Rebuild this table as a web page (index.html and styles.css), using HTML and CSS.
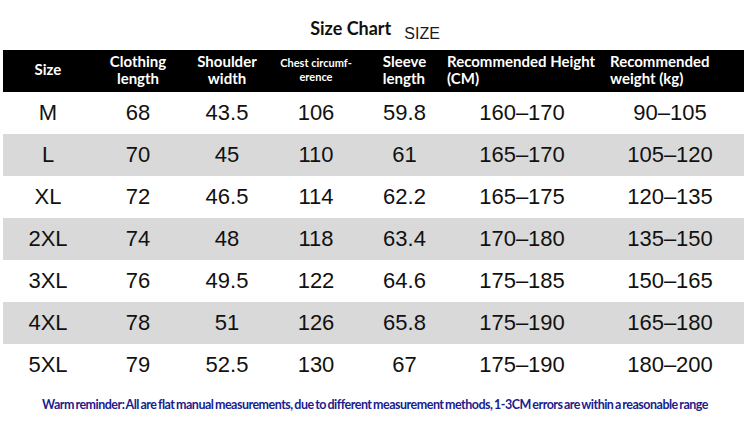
FILE: index.html
```html
<!DOCTYPE html>
<html>
<head>
<meta charset="utf-8">
<link rel="stylesheet" href="styles.css">
</head>
<body>
<div class="page">
  <div class="title"><span class="title-main">Size Chart</span><span class="title-sub">SIZE</span></div>
  <div class="chart">
    <div class="row head">
      <div class="hc">Size</div>
      <div class="hc">Clothing<br>length</div>
      <div class="hc">Shoulder<br>width</div>
      <div class="hc small">Chest circumf-<br>erence</div>
      <div class="hc left">Sleeve<br>length</div>
      <div class="hc left ht">Recommended Height<br>(CM)</div>
      <div class="hc left wt">Recommended<br>weight (kg)</div>
    </div>
    <div class="row"><div>M</div><div>68</div><div>43.5</div><div>106</div><div>59.8</div><div>160–170</div><div>90–105</div></div>
    <div class="row alt"><div>L</div><div>70</div><div>45</div><div>110</div><div>61</div><div>165–170</div><div>105–120</div></div>
    <div class="row"><div>XL</div><div>72</div><div>46.5</div><div>114</div><div>62.2</div><div>165–175</div><div>120–135</div></div>
    <div class="row alt"><div>2XL</div><div>74</div><div>48</div><div>118</div><div>63.4</div><div>170–180</div><div>135–150</div></div>
    <div class="row"><div>3XL</div><div>76</div><div>49.5</div><div>122</div><div>64.6</div><div>175–185</div><div>150–165</div></div>
    <div class="row alt"><div>4XL</div><div>78</div><div>51</div><div>126</div><div>65.8</div><div>175–190</div><div>165–180</div></div>
    <div class="row"><div>5XL</div><div>79</div><div>52.5</div><div>130</div><div>67</div><div>175–190</div><div>180–200</div></div>
  </div>
  <p class="note"><span class="note-text">Warm reminder: All are flat manual measurements, due to different measurement methods, 1-3CM errors are within a reasonable range</span></p>
</div>
</body>
</html>
```

FILE: styles.css
```css
html, body {
  margin: 0;
  padding: 0;
  background: #ffffff;
}

.page {
  width: 750px;
  height: 431px;
  overflow: hidden;
}

.title {
  box-sizing: border-box;
  height: 50px;
  padding-top: 18px;
  text-align: center;
  line-height: 20px;
}

.title-main {
  font-family: Lato, "Liberation Sans", sans-serif;
  font-weight: 700;
  font-size: 18px;
  color: #111111;
}

.title-sub {
  font-family: "Liberation Sans", Arial, sans-serif;
  font-size: 16px;
  color: #1a1a1a;
  margin-left: 13px;
  vertical-align: -4px;
}

.chart {
  margin-left: 3px;
  width: 741px;
}

.row {
  box-sizing: border-box;
  display: grid;
  grid-template-columns: 90px 90px 88px 90px 87px 148px 148px;
  height: 42px;
  align-items: center;
  font-family: "Liberation Sans", Arial, sans-serif;
  font-size: 22px;
  color: #111111;
  text-align: center;
}

.row.alt {
  background: #d9d9d9;
}

.row.head {
  background: #000000;
  color: #ffffff;
  font-family: Lato, "Open Sans", sans-serif;
  font-weight: 700;
  font-size: 15px;
  line-height: 17px;
  padding-bottom: 3px;
}

.hc {
  display: flex;
  justify-content: center;
  align-items: center;
  text-align: center;
  white-space: nowrap;
}

.hc.left {
  text-align: left;
}

.hc.small {
  font-size: 11px;
  line-height: 14px;
  font-weight: 700;
}

.hc.ht {
  justify-content: flex-start;
  margin-left: -1px;
}

.hc.wt {
  justify-content: flex-start;
  padding-left: 14px;
}

.note {
  margin: 10px 0 0 0;
  text-align: center;
  line-height: 16px;
}

.note-text {
  display: inline-block;
  font-family: Lato, "Liberation Sans", sans-serif;
  font-weight: 700;
  font-size: 12.5px;
  letter-spacing: -0.5px;
  word-spacing: -1px;
  color: #1c1c8e;
}
```
